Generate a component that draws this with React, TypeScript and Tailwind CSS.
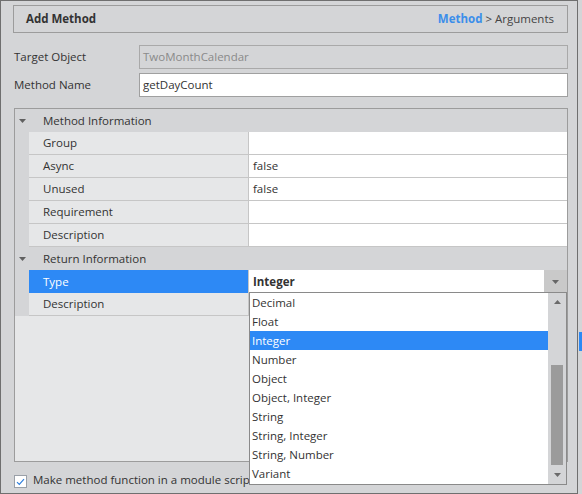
import React, { FC } from "react";

type TProp = { label: string; value?: string };

const methodInfo: TProp[] = [
  { label: "Group" },
  { label: "Async", value: "false" },
  { label: "Unused", value: "false" },
  { label: "Requirement" },
  { label: "Description" },
];

const typeOptions = [
  "Decimal",
  "Float",
  "Integer",
  "Number",
  "Object",
  "Object, Integer",
  "String",
  "String, Integer",
  "String, Number",
  "Variant",
];

const ArrowDown: FC<{ className?: string }> = ({ className }) => (
  <svg width="7" height="4" viewBox="0 0 7 4" className={className}>
    <path d="M0 0H7L3.5 4Z" fill="currentColor" />
  </svg>
);

const ArrowUp: FC<{ className?: string }> = ({ className }) => (
  <svg width="7" height="4" viewBox="0 0 7 4" className={className}>
    <path d="M0 4H7L3.5 0Z" fill="currentColor" />
  </svg>
);

const Category: FC<{ title: string }> = ({ title }) => (
  <div className="flex h-[23px] items-center bg-[#d4d5d7]">
    <div className="w-[14px] flex justify-center text-[#606060]">
      <ArrowDown />
    </div>
    <span className="pl-[14px]">{title}</span>
  </div>
);

const PropRow: FC<TProp> = ({ label, value }) => (
  <div className="flex h-[23px]">
    <div className="w-[14px] bg-[#d4d5d7]" />
    <div className="w-[219px] bg-[#e6e7e8] border-b border-[#c6c6c6] pl-[14px] flex items-center">
      {label}
    </div>
    <div className="flex-1 bg-white border-b border-l border-[#c6c6c6] pl-[4px] flex items-center">
      {value}
    </div>
  </div>
);

const App: FC = () => {
  return (
    <div className="relative w-[582px] h-[494px] overflow-hidden bg-[#d4d5d7] font-['Open_Sans',sans-serif] text-[11.5px] text-[#333]">
      <div className="w-[578px] h-[494px] border border-[#6f6f6f] flex flex-col">
        <div className="mt-[4px] ml-[12px] mr-[9px] h-[28px] border border-[#9c9c9c] flex items-center justify-between pl-[12px] pr-[13px]">
          <span className="font-bold text-[#333]">Add Method</span>
          <span>
            <span className="font-bold text-[#3b8eea]">Method</span>
            <span className="text-[#444]"> &gt; Arguments</span>
          </span>
        </div>

        <div className="mt-[12px] ml-[13px] mr-[9px] flex h-[24px] items-center">
          <span className="w-[125px]">Target Object</span>
          <div className="flex-1 h-full border border-[#a9a9a9] flex items-center pl-[3px] text-[#8a8a8a]">
            TwoMonthCalendar
          </div>
        </div>
        <div className="mt-[4px] ml-[13px] mr-[9px] flex h-[24px] items-center">
          <span className="w-[125px]">Method Name</span>
          <div className="flex-1 h-full bg-white border border-[#a0a0a0] flex items-center pl-[3px]">
            getDayCount
          </div>
        </div>

        <div className="mt-[11px] ml-[13px] mr-[9px] h-[354px] border border-[#9c9c9c] bg-[#e6e7e8] flex flex-col">
          <Category title="Method Information" />
          {methodInfo.map((p) => (
            <PropRow key={p.label} {...p} />
          ))}
          <Category title="Return Information" />
          <div className="flex h-[23px]">
            <div className="w-[14px] bg-[#d4d5d7]" />
            <div className="w-[219px] bg-[#2d89f5] text-white pl-[14px] flex items-center">
              Type
            </div>
            <div className="flex-1 bg-white border-l border-[#c6c6c6] flex items-center">
              <span className="flex-1 pl-[4px] font-bold">Integer</span>
              <div className="w-[23px] h-full bg-[#c9c9c9] flex items-center justify-center text-[#666]">
                <ArrowDown />
              </div>
            </div>
          </div>
          <PropRow label="Description" />
        </div>

        <div className="mt-[13px] ml-[13px] flex items-start">
          <div className="w-[13px] h-[13px] bg-white border border-[#9aa0a8] flex items-center justify-center">
            <svg width="9" height="8" viewBox="0 0 9 8">
              <path d="M1 4.2L3.3 6.5L8 1.2" fill="none" stroke="#2f7fdc" strokeWidth="1.2" />
            </svg>
          </div>
          <span className="ml-[6px] -mt-[2px] leading-[13px] whitespace-nowrap">
            Make method function in a module script
          </span>
        </div>
      </div>

      {/* open type dropdown */}
      <div className="absolute left-[249px] top-[292px] w-[318px] h-[193px] bg-white border border-[#8a8a8a] flex">
        <div className="flex-1 flex flex-col">
          {typeOptions.map((t) => (
            <div
              key={t}
              className={
                t === "Integer"
                  ? "h-[19px] pl-[2px] flex items-center bg-[#2d89f5] text-white"
                  : "h-[19px] pl-[2px] flex items-center"
              }
            >
              {t}
            </div>
          ))}
        </div>
        <div className="w-[18px] bg-[#d4d5d7] flex flex-col items-center text-[#6a6a6a]">
          <div className="h-[18px] flex items-center">
            <ArrowUp />
          </div>
          <div className="mt-[54px] w-[12px] h-[100px] bg-[#9b9b9b]" />
          <div className="flex-1 flex items-center">
            <ArrowDown />
          </div>
        </div>
      </div>
      <div className="absolute left-[579px] top-[332px] w-[3px] h-[19px] bg-[#2d89f5]" />
    </div>
  );
};

export default App;
